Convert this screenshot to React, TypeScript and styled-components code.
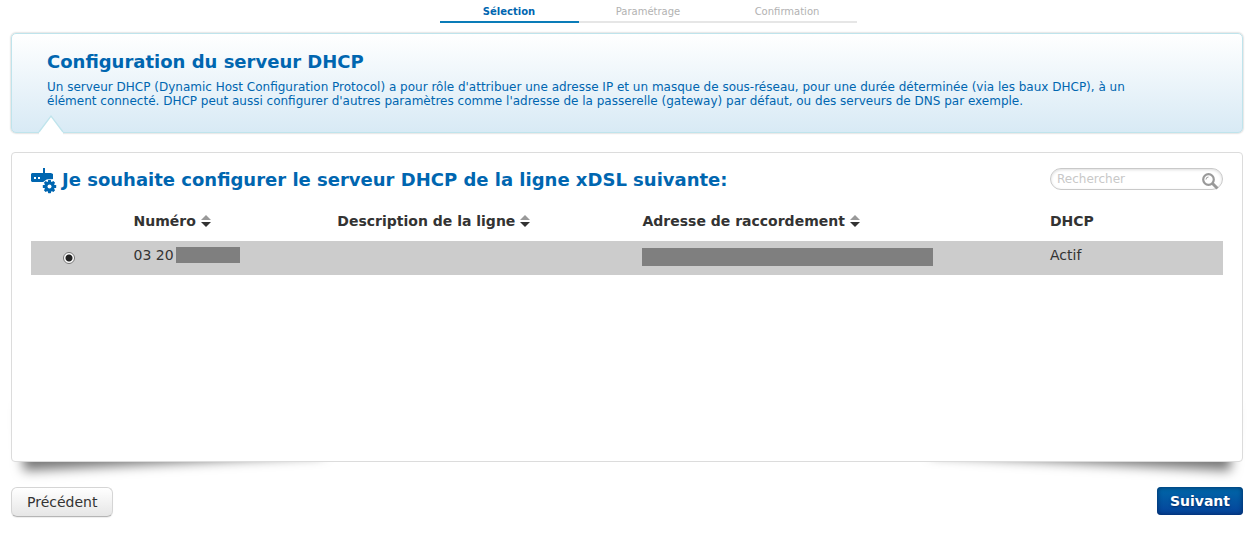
import React, { useState } from "react";
import styled, { createGlobalStyle } from "styled-components";

const GlobalStyle = createGlobalStyle`
  *, *::before, *::after { box-sizing: border-box; }
  body {
    margin: 0;
    background: #fff;
    color: #333;
    font-family: "DejaVu Sans", Verdana, sans-serif;
    font-size: 14px;
  }
`;

const Page = styled.main`
  padding: 0 11px 24px;
`;

const Steps = styled.ol`
  display: flex;
  justify-content: center;
  list-style: none;
  margin: 0 0 10px;
  padding: 0 0 0 42px;
`;

const Step = styled.li<{ $active?: boolean }>`
  flex: 0 1 139px;
  height: 23px;
  padding-top: 5px;
  border-bottom: 2px solid ${(p) => (p.$active ? "#0a7cb8" : "#e6e6e6")};
  color: ${(p) => (p.$active ? "#0066b0" : "#b2b2b2")};
  font-size: 10px;
  font-weight: ${(p) => (p.$active ? "bold" : "normal")};
  line-height: 14px;
  text-align: center;
`;

const Intro = styled.section`
  position: relative;
  min-height: 100px;
  padding: 18px 70px 24px 35px;
  border: 1px solid #bfe4ec;
  border-radius: 5px;
  background: linear-gradient(#fff, #d8eaf5);
  box-shadow: 0 0 2px #aaa;
  color: #0066b0;
`;

const IntroTitle = styled.h1`
  margin: 0 0 8px;
  font-size: 18px;
  line-height: 20px;
`;

const IntroText = styled.p`
  margin: 0;
  font-size: 12px;
  line-height: 14px;
`;

const Notch = styled.svg`
  position: absolute;
  left: 26px;
  bottom: -4px;
  width: 28px;
  height: 22px;
`;

const CardWrap = styled.div`
  position: relative;
  z-index: 0;
  margin-top: 19px;

  &::before,
  &::after {
    content: "";
    position: absolute;
    z-index: -1;
    bottom: 14px;
    left: 10px;
    width: 50%;
    max-width: 300px;
    height: 20%;
    box-shadow: 0 15px 12px #777;
    transform: rotate(-3deg);
  }

  &::after {
    right: 10px;
    left: auto;
    transform: rotate(3deg);
  }
`;

const Card = styled.section`
  min-height: 310px;
  padding: 15px 19px;
  border: 1px solid #dcdcdc;
  border-radius: 4px;
  background: #fff;
`;

const CardHeader = styled.header`
  display: flex;
  justify-content: space-between;
  align-items: flex-start;
`;

const CardTitle = styled.h2`
  display: flex;
  gap: 5px;
  margin: 0;
  color: #0066b0;
  font-size: 18px;
  line-height: 24px;

  svg { flex: none; }
`;

const Search = styled.form`
  display: flex;
  align-items: center;
  flex: none;
  width: 173px;
  height: 22px;
  padding: 0 3px 0 6px;
  border: 1px solid #c9c9c9;
  border-radius: 11px;
  box-shadow: inset 0 1px 3px #ddd;
`;

const SearchInput = styled.input`
  flex: 1;
  min-width: 0;
  padding: 0;
  border: 0;
  outline: 0;
  background: transparent;
  color: #333;
  font: 12px/18px "DejaVu Sans", Verdana, sans-serif;

  &::placeholder { color: #c8c8c8; opacity: 1; }
`;

const SearchButton = styled.button`
  display: flex;
  padding: 5px 0 0;
  border: 0;
  background: none;
`;

const Table = styled.table`
  width: 100%;
  margin-top: 14px;
  border-collapse: collapse;
  table-layout: fixed;
  line-height: 18px;
  text-align: left;
`;

const Col = styled.col<{ $width?: string }>`
  width: ${(p) => p.$width ?? "auto"};
`;

const HeadCell = styled.th`
  height: 33px;
  padding: 4px 0 0;
  vertical-align: top;
  white-space: nowrap;
  color: #333;
`;

const SortButton = styled.button`
  display: flex;
  align-items: center;
  gap: 5px;
  padding: 0;
  border: 0;
  background: none;
  color: inherit;
  font: inherit;
`;

const Row = styled.tr`
  background: #ccc;
`;

const Cell = styled.td`
  height: 34px;
  padding: 5px 0 0;
  vertical-align: top;
`;

const Value = styled.div`
  display: flex;
  gap: 2px;
`;

const Mask = styled.span<{ $size: "short" | "long" }>`
  display: block;
  width: ${(p) => (p.$size === "short" ? "64px" : "291px")};
  max-width: 100%;
  height: ${(p) => (p.$size === "short" ? "16px" : "18px")};
  margin-top: ${(p) => (p.$size === "short" ? "1px" : "2px")};
  background: #7f7f7f;
`;

const Radio = styled.input`
  appearance: none;
  display: block;
  width: 12px;
  height: 12px;
  margin: 6px 0 0 32px;
  border: 1px solid #777;
  border-radius: 50%;
  background: #fff;

  &:checked {
    background: radial-gradient(circle at center, #222 0 3px, #fff 4px);
  }
`;

const Actions = styled.footer`
  display: flex;
  justify-content: space-between;
  align-items: flex-start;
  margin-top: 25px;
`;

const Button = styled.button<{ $primary?: boolean }>`
  height: ${(p) => (p.$primary ? "28px" : "30px")};
  padding: 0 ${(p) => (p.$primary ? "13px" : "15px")};
  border: ${(p) => (p.$primary ? "0" : "1px solid #d5d5d5")};
  border-bottom-color: #b5b5b5;
  border-radius: ${(p) => (p.$primary ? "4px" : "6px")};
  background: ${(p) => (p.$primary ? "linear-gradient(#0068a8, #06429a)" : "linear-gradient(#fff, #e6e6e6)")};
  box-shadow: ${(p) => (p.$primary ? "inset 0 0 5px #00285f" : "0 1px 1px #eee")};
  color: ${(p) => (p.$primary ? "#fff" : "#333")};
  font: ${(p) => (p.$primary ? "bold" : "normal")} 14px/18px "DejaVu Sans", Verdana, sans-serif;
  text-shadow: ${(p) => (p.$primary ? "0 1px 2px #002a66" : "none")};
`;

function RouterIcon() {
  return (
    <svg width="26" height="26" viewBox="0 0 26 26" aria-hidden="true">
      <path fill="#0066b0" d="M12 0h2v5h6l2 1v5l-8 3H1l-1-1V6l1-1h11z" />
      <path fill="#fff" d="M3 9h2v2H3zM7 9h2v2H7z" />
      <circle cx="18.5" cy="18.5" r="7.5" fill="#fff" />
      <g fill="#0066b0">
        {[0, 45, 90, 135].map((angle) => (
          <rect key={angle} x="17" y="11.8" width="3" height="13.4" rx="0.6" transform={`rotate(${angle} 18.5 18.5)`} />
        ))}
        <circle cx="18.5" cy="18.5" r="5.2" />
      </g>
      <circle cx="18.5" cy="18.5" r="2" fill="#fff" />
    </svg>
  );
}

function SortIcon() {
  return (
    <svg width="10" height="12" viewBox="0 0 10 12" aria-hidden="true">
      <path fill="#999" d="M5 0l5 5H0z" />
      <path fill="#333" d="M0 7h10l-5 5z" />
    </svg>
  );
}

function SearchIcon() {
  return (
    <svg width="17" height="17" viewBox="0 0 17 17" fill="none" stroke="#999" aria-hidden="true">
      <circle cx="6.5" cy="6.5" r="5.3" strokeWidth="2.2" />
      <path d="M4 6.5A2.5 2.5 0 0 1 6.5 4" strokeWidth="1" />
      <path d="M10.5 10.5l5 5" strokeWidth="3" />
    </svg>
  );
}

export default function App() {
  const [query, setQuery] = useState("");
  return (
    <>
      <GlobalStyle />
      <Page>
        <Steps>
          <Step $active aria-current="step">Sélection</Step>
          <Step>Paramétrage</Step>
          <Step>Confirmation</Step>
        </Steps>
        <Intro>
          <IntroTitle>Configuration du serveur DHCP</IntroTitle>
          <IntroText>
            Un serveur DHCP (Dynamic Host Configuration Protocol) a pour rôle d'attribuer une adresse IP et un masque de
            sous-réseau, pour une durée déterminée (via les baux DHCP), à un élément connecté. DHCP peut aussi configurer
            d'autres paramètres comme l'adresse de la passerelle (gateway) par défaut, ou des serveurs de DNS par exemple.
          </IntroText>
          <Notch viewBox="0 0 28 22" aria-hidden="true">
            <path d="M1 22V18L13 2l12 16v4z" fill="#fff" />
            <path d="M1 18L13 2l12 16" fill="none" stroke="#bfe4ec" strokeWidth="1.3" />
          </Notch>
        </Intro>
        <CardWrap>
          <Card>
            <CardHeader>
              <CardTitle>
                <RouterIcon />
                Je souhaite configurer le serveur DHCP de la ligne xDSL suivante:
              </CardTitle>
              <Search role="search" onSubmit={(e) => e.preventDefault()}>
                <SearchInput
                  aria-label="Rechercher"
                  placeholder="Rechercher"
                  value={query}
                  onChange={(e) => setQuery(e.target.value)}
                />
                <SearchButton type="submit" aria-label="Rechercher">
                  <SearchIcon />
                </SearchButton>
              </Search>
            </CardHeader>
            <Table>
              <colgroup>
                <Col $width="8.6%" />
                <Col $width="17.1%" />
                <Col $width="25.6%" />
                <Col />
                <Col $width="173px" />
              </colgroup>
              <thead>
                <tr>
                  <HeadCell as="td" />
                  {["Numéro", "Description de la ligne", "Adresse de raccordement"].map((label) => (
                    <HeadCell key={label} scope="col">
                      <SortButton type="button">
                        {label}
                        <SortIcon />
                      </SortButton>
                    </HeadCell>
                  ))}
                  <HeadCell scope="col">DHCP</HeadCell>
                </tr>
              </thead>
              <tbody>
                <Row>
                  <Cell>
                    <Radio type="radio" name="line" aria-label="Ligne 03 20" defaultChecked />
                  </Cell>
                  <Cell>
                    <Value>
                      03 20 <Mask $size="short" />
                    </Value>
                  </Cell>
                  <Cell />
                  <Cell>
                    <Mask $size="long" />
                  </Cell>
                  <Cell>Actif</Cell>
                </Row>
              </tbody>
            </Table>
          </Card>
        </CardWrap>
        <Actions>
          <Button type="button">Précédent</Button>
          <Button type="button" $primary>Suivant</Button>
        </Actions>
      </Page>
    </>
  );
}
